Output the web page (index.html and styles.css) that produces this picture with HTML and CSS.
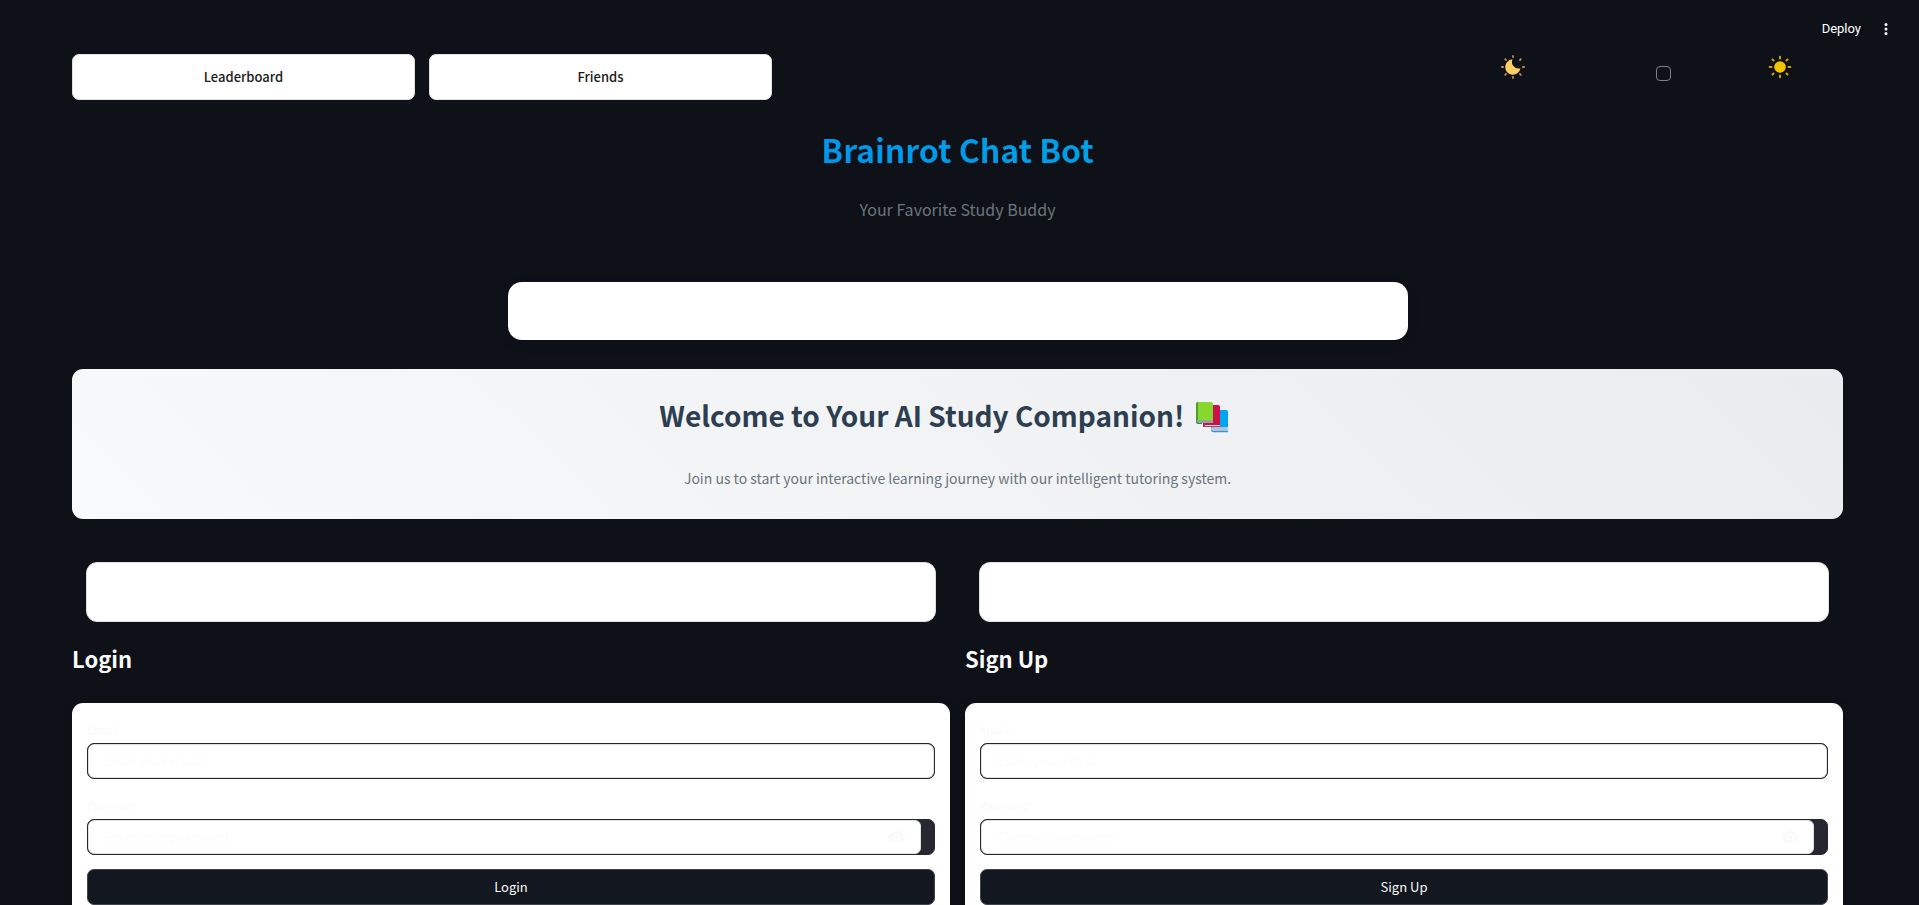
FILE: index.html
```html
<!DOCTYPE html>
<html lang="en">
<head>
    <meta charset="UTF-8">
    <meta name="viewport" content="width=device-width, initial-scale=1.0">
    <title>Brainrot Chat Bot</title>
    <link rel="stylesheet" href="styles.css">
</head>
<body>
    <header class="toolbar">
        <button class="deploy" type="button">Deploy</button>
        <button class="menu" type="button" aria-label="Main menu">
            <svg width="4" height="12" viewBox="0 0 4 12" fill="#fafafa"><circle cx="2" cy="1.6" r="1.5"/><circle cx="2" cy="6" r="1.5"/><circle cx="2" cy="10.4" r="1.5"/></svg>
        </button>
    </header>

    <main class="container">
        <div class="top-row">
            <button class="nav-button" type="button">Leaderboard</button>
            <button class="nav-button" type="button">Friends</button>
            <div class="theme">
                <svg class="theme-icon" width="24" height="24" viewBox="0 0 24 24">
                    <path d="M11.500 4.300A7.700 7.700 0 1 0 19.500 13.200A6.600 6.600 0 0 1 11.500 4.300Z" fill="#ffcf63"/>
                    <g stroke="#c08c52" stroke-width="1.8" stroke-linecap="round"><path d="M12 .9v1.200M12 21.900v1.200M.9 12h1.200M21.900 12h1.200M4.200 4.200l.8.8M19 5l.8-.8M4.200 19.800l.8-.8M19 19l.8.8"/></g>
                </svg>
                <input class="theme-check" type="checkbox" aria-label="Light mode">
                <svg class="theme-icon" width="24" height="24" viewBox="0 0 24 24">
                    <circle cx="12" cy="12" r="5.8" fill="#f2c500"/>
                    <g stroke="#d99e0b" stroke-width="2" stroke-linecap="round"><path d="M12 1.700v1.800M12 20.500v1.800M1.700 12h1.800M20.500 12h1.800M4.500 4.500l1 1M18.500 5.500l1-1M4.500 19.500l1-1M18.500 18.500l1 1"/></g>
                </svg>
            </div>
        </div>

        <h1 class="title">Brainrot Chat Bot</h1>
        <p class="subtitle">Your Favorite Study Buddy</p>

        <div class="chat-box"></div>

        <section class="welcome">
            <h2>Welcome to Your AI Study Companion!
                <svg class="books" width="36" height="36" viewBox="0 0 36 36">
                    <path d="M17 12h15q2 0 2 2v19q0 1-1 1H19q-2 0-2-2z" fill="#00a4ef"/>
                    <path d="M17 31q0-2 2-2h15v4H19q-2 0-2-2z" fill="#a9c5d9"/>
                    <path d="M18 33h16v1.200H19z" fill="#3c92cf"/>
                    <path d="M9 7h15q2 0 2 2v18q0 1-1 1H9z" fill="#cb104c"/>
                    <path d="M9 27h17v2H9z" fill="#b43460"/>
                    <path d="M11 27h15v1H11z" fill="#eed5de"/>
                    <path d="M4 4h13q2 0 2 2v19H2V6q0-2 2-2z" fill="#86d82f"/>
                    <path d="M2 6q0-2 2-2v21H2z" fill="#4f9c2d"/>
                    <path d="M2 24q0-2 2-2h15v3H4z" fill="#90a59b"/>
                    <path d="M2 23q1 2 3 2h3v1H4q-2 0-2-2z" fill="#239357"/>
                </svg>
            </h2>
            <p>Join us to start your interactive learning journey with our intelligent tutoring system.</p>
        </section>

        <div class="columns">
            <section class="column">
                <div class="card"></div>
                <h3>Login</h3>
                <form class="form">
                    <label for="login-email">Email</label>
                    <div class="field">
                        <input id="login-email" type="email" placeholder="Enter your email">
                    </div>
                    <label for="login-password">Password</label>
                    <div class="field password">
                        <input id="login-password" type="password" placeholder="Enter your password">
                        <button class="eye" type="button" aria-label="Show password">
                            <svg width="18" height="12" viewBox="0 0 18 12"><path d="M9 0C5 0 2 2.500.5 6 2 9.500 5 12 9 12s7-2.500 8.500-6C16 2.500 13 0 9 0zm0 9.500a3.500 3.500 0 1 1 0-7 3.500 3.500 0 0 1 0 7zm0-6a2.500 2.500 0 1 0 0 5 2.500 2.500 0 0 0 0-5z" fill="#fafafa"/></svg>
                        </button>
                    </div>
                    <button class="submit" type="submit">Login</button>
                </form>
            </section>

            <section class="column">
                <div class="card"></div>
                <h3>Sign Up</h3>
                <form class="form">
                    <label for="signup-email">Email</label>
                    <div class="field">
                        <input id="signup-email" type="email" placeholder="Enter your email">
                    </div>
                    <label for="signup-password">Password</label>
                    <div class="field password">
                        <input id="signup-password" type="password" placeholder="Choose a password">
                        <button class="eye" type="button" aria-label="Show password">
                            <svg width="18" height="12" viewBox="0 0 18 12"><path d="M9 0C5 0 2 2.500.5 6 2 9.500 5 12 9 12s7-2.500 8.500-6C16 2.500 13 0 9 0zm0 9.500a3.500 3.500 0 1 1 0-7 3.500 3.500 0 0 1 0 7zm0-6a2.500 2.500 0 1 0 0 5 2.500 2.500 0 0 0 0-5z" fill="#fafafa"/></svg>
                        </button>
                    </div>
                    <button class="submit" type="submit">Sign Up</button>
                </form>
            </section>
        </div>
    </main>
</body>
</html>
```
FILE: styles.css
```css
* {
    box-sizing: border-box;
}

body {
    margin: 0;
    height: 100vh;
    overflow: hidden;
    background-color: #0e1117;
    color: #fafafa;
    font-family: "Noto Sans CJK SC", "Open Sans", sans-serif;
    font-size: 14px;
}

button,
input {
    font-family: inherit;
    margin: 0;
}

button {
    cursor: pointer;
}

/* Toolbar */
.toolbar {
    display: flex;
    justify-content: flex-end;
    align-items: center;
    gap: 23px;
    height: 54px;
    padding: 3px 31px 0 0;
}

.toolbar button {
    padding: 0;
    border: none;
    background: none;
    color: #fff;
}

.toolbar .deploy {
    font-family: Roboto, sans-serif;
    font-size: 13px;
    line-height: 20px;
}

.toolbar .menu {
    display: flex;
}

.container {
    padding: 0 76px 48px 72px;
}

/* Top row */
.top-row {
    display: grid;
    grid-template-columns: repeat(5, 1fr);
    gap: 14px;
}

.nav-button {
    height: 46px;
    padding: 0 0 2px;
    border: 1px solid #e0e0e0;
    border-radius: 7px;
    background-color: #fff;
    color: #1a1a1a;
    font-size: 13px;
    font-weight: 500;
}

.theme {
    display: grid;
    grid-template-columns: 155fr 112fr 75fr;
    align-items: start;
    grid-column: 5;
    padding-left: 1px;
}

.theme-icon {
    margin-top: 1px;
}

.theme-check {
    appearance: none;
    width: 15px;
    height: 15px;
    margin-top: 12px;
    border: 1px solid #7c7e84;
    border-radius: 4px;
}

/* Heading */
.title {
    margin: 23px 0 0;
    background: linear-gradient(45deg, #007bff, #00bcd4);
    background-clip: text;
    color: transparent;
    font-size: 32px;
    font-weight: 700;
    line-height: 52px;
    text-align: center;
}

.subtitle {
    margin: 21px 0 0;
    color: #6c757d;
    font-size: 16px;
    line-height: 26px;
    text-align: center;
}

.chat-box {
    max-width: 900px;
    height: 58px;
    margin: 60px auto 29px;
    border-radius: 14px;
    background-color: #fff;
    box-shadow: 0 4px 12px rgba(0, 0, 0, 0.1);
}

/* Welcome banner */
.welcome {
    padding: 22px 24px 28px;
    border-radius: 11px;
    background: linear-gradient(45deg, #f8f9fa, #e9ecef);
    text-align: center;
}

.welcome h2 {
    margin: 0;
    padding-right: 26px;
    color: #2c3e50;
    font-size: 28px;
    font-weight: 700;
    line-height: 48px;
}

.books {
    margin-left: 3px;
    vertical-align: -7px;
}

.welcome p {
    margin: 26px 0 0;
    color: #6c757d;
    font-size: 14px;
    line-height: 26px;
}

/* Login and sign up */
.columns {
    display: grid;
    grid-template-columns: 1fr 1fr;
    gap: 15px;
    margin-top: 43px;
}

.card {
    height: 60px;
    margin: 0 14px;
    border: 1px solid #e0e0e0;
    border-radius: 11px;
    background-color: #fff;
}

.column h3 {
    margin: 17px 0 26px;
    font-size: 22px;
    font-weight: 700;
    line-height: 38px;
}

.form {
    padding: 16px 15px;
    border-radius: 11px;
    background-color: #fff;
    box-shadow: 0 4px 12px rgba(0, 0, 0, 0.2);
}

.form label {
    display: block;
    height: 24px;
    font-size: 11px;
    line-height: 20px;
}

.field {
    display: flex;
    height: 36px;
    margin-bottom: 16px;
    overflow: hidden;
    border: 1px solid #262730;
    border-radius: 7px;
    background-color: #262730;
}

.field input {
    flex: 1;
    min-width: 0;
    padding: 0 16px 2px 15px;
    border: 1px solid #e0e0e0;
    border-radius: 6px;
    background-color: #fff;
    color: #262730;
    font-size: 13px;
}

.field input::placeholder {
    color: #fcfcfc;
    opacity: 1;
}

.password {
    position: relative;
    margin-bottom: 14px;
    padding-right: 13px;
}

.eye {
    position: absolute;
    top: 11px;
    right: 28px;
    display: flex;
    padding: 0;
    border: none;
    background: none;
}

.submit {
    width: 100%;
    height: 36px;
    padding: 0 0 2px;
    border: 1px solid #41444c;
    border-radius: 7px;
    background-color: #131720;
    color: #fafafa;
    font-size: 13px;
    font-weight: 400;
}
```
